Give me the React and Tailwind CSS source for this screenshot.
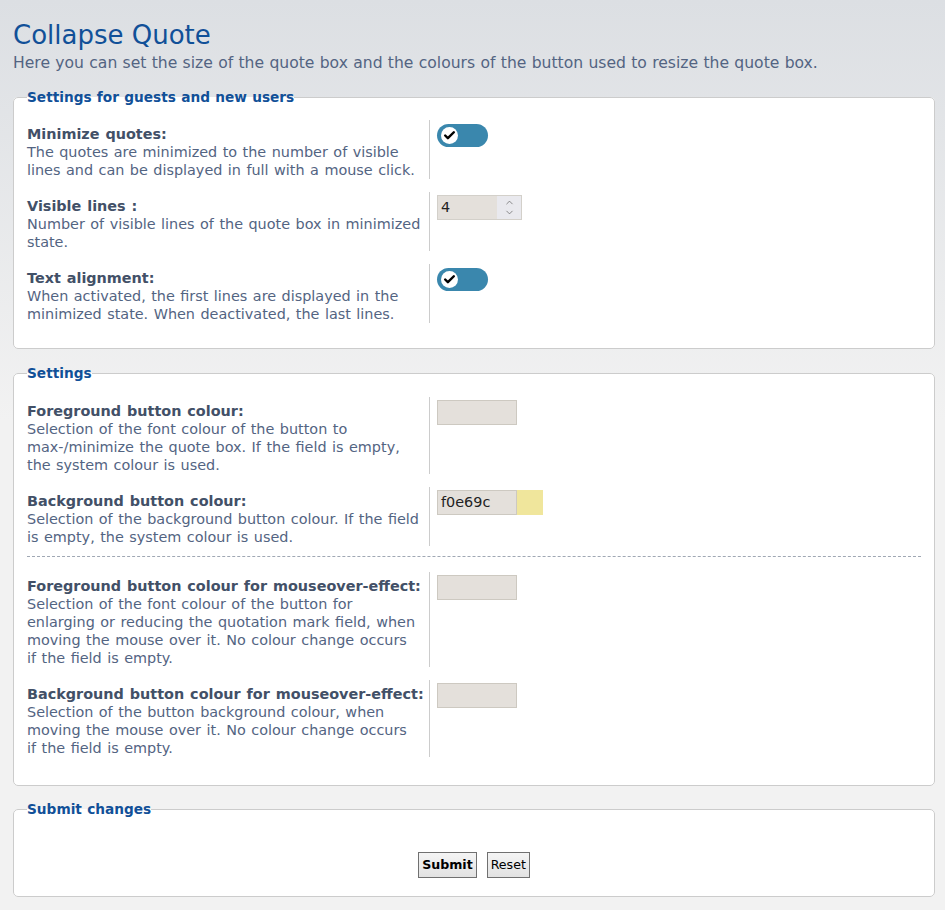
import React from 'react';
import { Check, ChevronUp, ChevronDown } from 'lucide-react';

const font = { fontFamily: '"DejaVu Sans", Verdana, sans-serif' };

const Toggle = () => (
  <div className="mt-[4px] flex h-[23px] w-[51px] items-center rounded-full bg-[#3a87ad] pl-[4px]">
    <div className="flex h-[17px] w-[17px] items-center justify-center rounded-full bg-white">
      <Check size={13} strokeWidth={4.5} className="text-black" />
    </div>
  </div>
);

const NumberBox = ({ value }) => (
  <div className="mt-[3px] flex h-[25px] w-[85px] border border-[#d3d0ca] bg-[#e4e0db]">
    <span className="flex-1 pl-[3px] text-[14.4px] leading-[23px] text-[#222]">{value}</span>
    <div className="flex w-[24px] flex-col items-center justify-center bg-[#e9e9ee] text-[#666]">
      <ChevronUp size={11} strokeWidth={1.6} className="-mb-[1px]" />
      <ChevronDown size={11} strokeWidth={1.6} />
    </div>
  </div>
);

const ColourBox = ({ value, swatch }) => (
  <div className="mt-[3px] flex">
    <div className="h-[25px] w-[80px] border border-[#cdc9c1] bg-[#e4e0db] pl-[3px] text-[14.4px] leading-[23px] text-[#222]">
      {value}
    </div>
    {swatch && <div className="h-[25px] w-[26px]" style={{ background: '#' + swatch }} />}
  </div>
);

const Row = ({ label, desc, children, className = '', descClass = 'pr-[7px]' }) => (
  <div className={`flex ${className}`}>
    <div className="w-[402px] shrink-0 pt-[5px] text-[14.4px] leading-[18px] [word-spacing:0.9px]">
      <div className="font-bold text-[#425067]">{label}</div>
      <div className={`text-[#536482] ${descClass}`}>{desc}</div>
    </div>
    <div className="flex-1 border-l border-[#cccccc] pl-[7px]">{children}</div>
  </div>
);

const Box = ({ legend, children, className = '' }) => (
  <fieldset className={`rounded-[5px] border border-[#cccccc] bg-white px-[13px] ${className}`}>
    <legend className="px-0 text-[13.7px] font-bold leading-[17px] text-[#115098] [word-spacing:0.5px]">{legend}</legend>
    {children}
  </fieldset>
);

export default function App() {
  return (
    <div
      style={font}
      className="min-h-[910px] bg-[linear-gradient(to_bottom,#dcdfe3_0px,#f2f2f2_420px,#f2f2f2_100%)] pl-[13px] pr-[10px] pt-[20px] pb-[12px]"
    >
      <h1 className="text-[26px] leading-[30px] font-normal text-[#115098]">Collapse Quote</h1>
      <p className="mt-[3px] text-[15.6px] leading-[20px] text-[#536482] [word-spacing:0.35px]">
        Here you can set the size of the quote box and the colours of the button used to resize the quote box.
      </p>

      <Box legend="Settings for guests and new users" className="mt-[16px] pt-[14px] pb-[25px]">
        <Row
          label="Minimize quotes:"
          desc="The quotes are minimized to the number of visible lines and can be displayed in full with a mouse click."
        >
          <Toggle />
        </Row>
        <Row
          className="mt-[13px]"
          label="Visible lines :"
          desc="Number of visible lines of the quote box in minimized state."
        >
          <NumberBox value="4" />
        </Row>
        <Row
          className="mt-[13px]"
          label="Text alignment:"
          desc="When activated, the first lines are displayed in the minimized state. When deactivated, the last lines."
        >
          <Toggle />
        </Row>
      </Box>

      <Box legend="Settings" className="mt-[16px] pt-[15px] pb-[28px]">
        <Row
          label="Foreground button colour:"
          desc="Selection of the font colour of the button to max-/minimize the quote box. If the field is empty, the system colour is used."
        >
          <ColourBox value="" />
        </Row>
        <Row
          className="mt-[13px]"
          label="Background button colour:"
          desc="Selection of the background button colour. If the field is empty, the system colour is used."
        >
          <ColourBox value="f0e69c" swatch="f0e69c" />
        </Row>
        <hr className="mt-[10px] border-0 border-t border-dashed border-[#a0a8b4]" />
        <Row
          className="mt-[15px]"
          descClass="pr-[11px]"
          label="Foreground button colour for mouseover-effect:"
          desc="Selection of the font colour of the button for enlarging or reducing the quotation mark field, when moving the mouse over it. No colour change occurs if the field is empty."
        >
          <ColourBox value="" />
        </Row>
        <Row
          className="mt-[13px]"
          descClass="pr-[11px]"
          label="Background button colour for mouseover-effect:"
          desc="Selection of the button background colour, when moving the mouse over it. No colour change occurs if the field is empty."
        >
          <ColourBox value="" />
        </Row>
      </Box>

      <Box legend="Submit changes" className="mt-[15px] pt-[34px] pb-[18px]">
        <div className="flex justify-center gap-[10px]">
          <button className="h-[26px] border border-[#707070] bg-[linear-gradient(to_bottom,#f4f4f4,#e2e2e2)] px-[3px] text-[12.6px] font-bold text-black">
            Submit
          </button>
          <button className="h-[26px] border border-[#707070] bg-[linear-gradient(to_bottom,#f4f4f4,#e2e2e2)] px-[3px] text-[12.6px] text-black">
            Reset
          </button>
        </div>
      </Box>
    </div>
  );
}
